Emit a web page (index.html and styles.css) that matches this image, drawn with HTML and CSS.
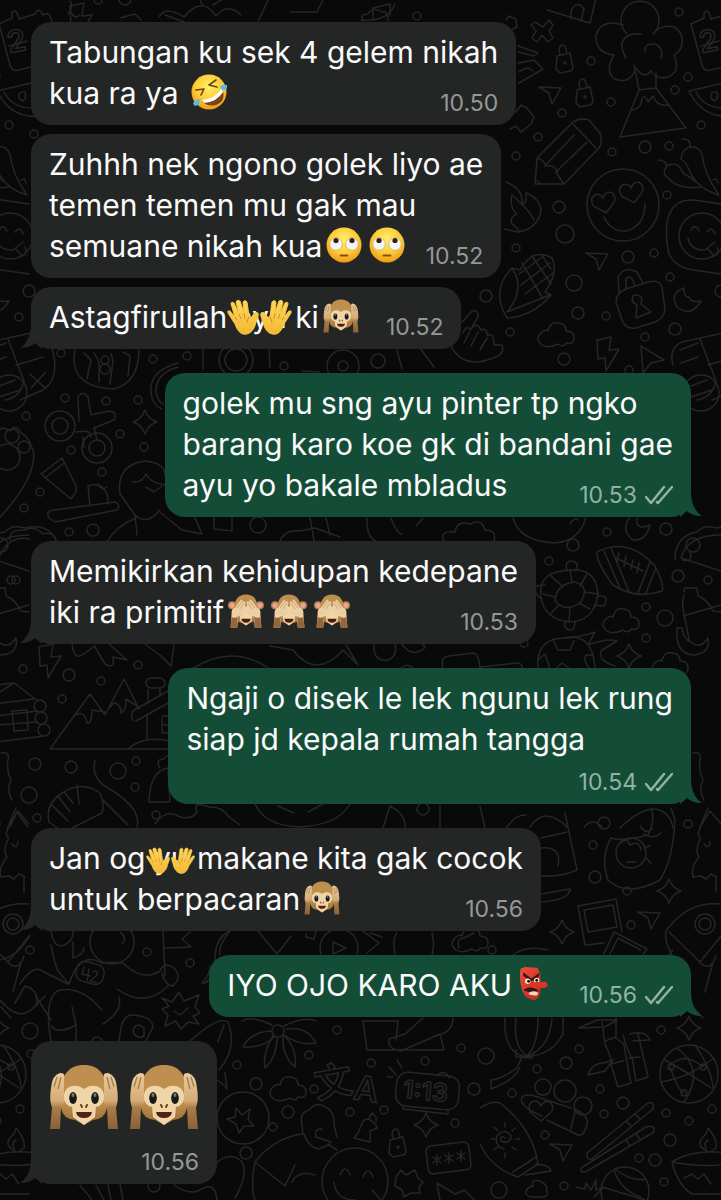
FILE: index.html
```html
<!DOCTYPE html>
<html lang="jv">
<head>
<meta charset="utf-8">
<meta name="viewport" content="width=device-width, initial-scale=1">
<title>Chat</title>
<link rel="stylesheet" href="styles.css">
</head>
<body>
<svg class="sprites" aria-hidden="true">
  <defs>
    <radialGradient id="face" cx=".5" cy=".35" r=".65"><stop offset="0" stop-color="#fff06a"/><stop offset=".6" stop-color="#fdcb35"/><stop offset="1" stop-color="#ee9a1b"/></radialGradient>
    <linearGradient id="fur" x1="0" y1="0" x2="0" y2="1"><stop offset="0" stop-color="#bd8e50"/><stop offset=".6" stop-color="#c1904f"/><stop offset="1" stop-color="#9a6b35"/></linearGradient>
    <linearGradient id="arm" x1="0" y1="0" x2="0" y2="1"><stop offset="0" stop-color="#e9cba0"/><stop offset=".5" stop-color="#d5ab76"/><stop offset=".62" stop-color="#a87c49"/><stop offset="1" stop-color="#8b6237"/></linearGradient>
    <linearGradient id="skin" x1="0" y1="0" x2="0" y2="1"><stop offset="0" stop-color="#ffd95e"/><stop offset="1" stop-color="#f3b732"/></linearGradient>
    <linearGradient id="red" x1="0" y1="0" x2="1" y2="1"><stop offset="0" stop-color="#f0513b"/><stop offset="1" stop-color="#b81f1c"/></linearGradient>
    <symbol id="rofl" viewBox="0 0 36 36">
      <circle cx="18" cy="18" r="17.5" fill="url(#face)"/>
      <path d="M11 27Q24 27 31 14Q36 27 25 31Q16 33 11 27Z" fill="#7c4313"/>
      <path d="M11 26Q24 25 31 14L32 18Q26 28 13 29Z" fill="#fff"/>
      <path d="M5 16L13 15L10 21M25 6L18 11L26 13" fill="none" stroke="#70400f" stroke-width="1.6" stroke-linecap="round" stroke-linejoin="round"/>
      <path d="M29 14Q30 10 36 11Q37 16 32 16ZM9 25Q9 31 4 32Q0 29 5 26Z" fill="#5bb9e9"/>
    </symbol>
    <symbol id="roll" viewBox="0 0 36 36">
      <circle cx="18" cy="18" r="17.5" fill="url(#face)"/>
      <circle cx="10" cy="17" r="6.3" fill="#f5f5f3" stroke="#c9ae77" stroke-width=".8"/><circle cx="26" cy="17" r="6.3" fill="#f5f5f3" stroke="#c9ae77" stroke-width=".8"/>
      <circle cx="10" cy="13.5" r="2.6" fill="#3a1d0c"/><circle cx="26" cy="13.5" r="2.6" fill="#3a1d0c"/>
      <path d="M14.500 28.500H21.500" stroke="#8a4b12" stroke-width="1.800" stroke-linecap="round"/>
    </symbol>
    <symbol id="monkey-head" viewBox="0 0 70 66">
      <path d="M35 1C20 1 13 11 13 24L12 44Q14 55 26 56L35 61L44 56Q56 55 58 44L57 24C57 11 50 1 35 1Z" fill="url(#fur)"/>
      <path d="M35 25C28 19 16 21 15 31Q14 41 23 43L24 53L35 61L46 53L47 43Q56 41 55 31C54 21 42 19 35 25Z" fill="#f0d6a7"/>
    </symbol>
    <symbol id="hear" viewBox="0 0 70 66">
      <use href="#monkey-head" width="70" height="66"/>
      <ellipse cx="24" cy="34" rx="3.800" ry="6" fill="#17191b"/><ellipse cx="46" cy="34" rx="3.800" ry="6" fill="#17191b"/>
      <ellipse cx="24" cy="31" rx="1.500" ry="2" fill="#777"/><ellipse cx="46" cy="31" rx="1.500" ry="2" fill="#777"/>
      <path d="M32 41L33 43M38 41L37 43" stroke="#6b4422" stroke-width="2" stroke-linecap="round"/>
      <path d="M27 48H43Q42 54 35 54Q28 54 27 48Z" fill="#55201a"/>
      <path d="M1 65L3 44Q0 35 2 24Q3 11 11 9Q17 8 15 16V38Q14 41 12 43L11 65Z" fill="url(#arm)"/>
      <path d="M69 65L67 44Q70 35 68 24Q67 11 59 9Q53 8 55 16V38Q56 41 58 43L59 65Z" fill="url(#arm)"/>
      <path d="M5 23L8 13M9 25L12 13M65 23L62 13M61 25L58 13" stroke="#a87b4a" stroke-width="1.300"/>
    </symbol>
    <symbol id="see" viewBox="0 0 70 66">
      <circle cx="8" cy="22" r="8" fill="#b98048"/><circle cx="62" cy="22" r="8" fill="#b98048"/><circle cx="8" cy="22" r="5" fill="#e9a590"/><circle cx="62" cy="22" r="5" fill="#e9a590"/>
      <use href="#monkey-head" width="70" height="66"/>
      <path d="M26 48H44Q43 56 35 56Q27 56 26 48Z" fill="#4a1d15"/>
      <path d="M5 65L7 39Q6 28 14 26L25 11Q29 10 28 16L32 14Q35 16 33 20V35Q33 43 20 43L18 65ZM65 65L63 39Q64 28 56 26L45 11Q41 10 42 16L38 14Q35 16 37 20V35Q37 43 50 43L52 65Z" fill="#ecd0a5"/>
      <path d="M5 65L7 44Q14 49 19 43L18 65ZM65 65L63 44Q56 49 51 43L52 65Z" fill="#946639"/>
      <path d="M18 27L27 15M23 29L31 18M52 27L43 15M47 29L39 18" stroke="#b78959" stroke-width="1.300"/>
    </symbol>
    <symbol id="hand" viewBox="0 0 32 36">
      <path d="M8 25L1 14Q0 11 3 12L8 18L4 5Q4 2 7 4L12 15L9 3Q10 0 13 2L17 14L16 3Q18 0 20 3L22 17Q24 20 26 16Q28 12 31 14Q32 16 29 23Q27 33 20 35Q12 37 8 25Z" fill="url(#skin)" stroke="#f8c744" stroke-width="1"/>
      <path d="M8 18L10 21M12 15L14 20M17 14L18 20M22 18Q20 21 20 24" fill="none" stroke="#cf8f20" stroke-width="1"/>
    </symbol>
    <symbol id="goblin" viewBox="0 0 34 40">
      <path d="M2 3L7 1L21 2L24 8V18Q32 15 32 22Q30 26 24 24Q25 35 18 38Q8 37 4 28Q0 14 2 3Z" fill="url(#red)"/>
      <path d="M5 7L14 14L24 7L21 14L14 17L5 11Z" fill="#351a14"/>
      <circle cx="10" cy="17" r="3" fill="#f5dfc6"/><circle cx="20" cy="16" r="3" fill="#f5dfc6"/><circle cx="11" cy="17" r="1.500"/><circle cx="20" cy="16" r="1.500"/>
      <path d="M5 27Q10 22 18 25L23 28Q15 28 11 29Z" fill="#2d1713"/><path d="M11 30Q17 26 22 30L20 33L12 32Z" fill="#ead9c3"/>
      <path d="M14 19Q18 17 25 18Q32 16 32 22Q28 26 15 24Z" fill="#d9352b"/>
    </symbol>
    <symbol id="ticks" viewBox="0 0 28 20"><path d="M1 12L6 18L19 2M12 17L13 18L27 2" fill="none" stroke="currentColor" stroke-width="2.500" stroke-linecap="round" stroke-linejoin="round"/></symbol>
    <symbol id="tail" viewBox="0 0 22 26"><path d="M11 0Q11 18 0 25Q10 25 15 20L22 26V0Z" fill="currentColor"/></symbol>
    <path id="star" d="M0-12Q3-3 12 0Q3 3 0 12Q-3 3-12 0Q-3-3 0-12Z"/>
    <path id="cloud" d="M-14 10Q-22 4-14-3Q-10-6-8-4Q-6-14 3-12Q10-11 10-4Q18-4 18 3Q18 10 10 8Q8 13 2 9Q-8 14-14 10Z"/>
    <path id="cursor" d="M-11-6L11-5L2 11L-1 0Z"/>
    <g id="lock"><path d="M-7-5L6-8L9 6Q9 9 6 10L-4 12L-8 8ZM-4-6L-5-12Q-3-18 1-15L3-8"/><circle cx="1" cy="2" r="1"/></g>
    <path id="heart" d="M0 11L-11 2Q-14-8-6-9Q-2-9 0-4Q3-10 9-8Q15-2 8 4Z"/>
    <path id="bolt" d="M-10-14L4-17L2-4L12-5L-1 17L-2 4L-9 5Z"/>
  </defs>
</svg>

<svg class="wallpaper" viewBox="0 0 721 1200" preserveAspectRatio="xMidYMin slice" aria-hidden="true">
  <g id="doodles">
    <!-- bubbles -->
    <circle cx="417" cy="16" r="4"/><circle cx="679" cy="12" r="4"/><circle cx="591" cy="61" r="4"/><circle cx="611" cy="102" r="4"/><circle cx="562" cy="113" r="4"/><circle cx="538" cy="137" r="4"/><circle cx="516" cy="156" r="4"/><circle cx="612" cy="152" r="4"/><circle cx="645" cy="147" r="6"/><circle cx="669" cy="146" r="4"/><circle cx="688" cy="77" r="4"/><circle cx="675" cy="90" r="4"/><circle cx="701" cy="125" r="4"/><circle cx="667" cy="195" r="4"/><circle cx="559" cy="207" r="6"/><circle cx="565" cy="234" r="9"/><circle cx="516" cy="248" r="4"/><circle cx="628" cy="257" r="6"/><circle cx="654" cy="253" r="4"/><circle cx="34" cy="134" r="4"/><circle cx="98" cy="0" r="4"/><circle cx="125" cy="-1" r="6"/>
    <circle cx="721" cy="291" r="6"/><circle cx="19" cy="317" r="4"/><circle cx="61" cy="353" r="4"/><circle cx="153" cy="359" r="4"/><circle cx="187" cy="356" r="4"/><circle cx="284" cy="366" r="4"/><circle cx="65" cy="398" r="4"/><circle cx="106" cy="401" r="4"/><circle cx="138" cy="400" r="4"/><circle cx="26" cy="416" r="4"/><circle cx="120" cy="434" r="4"/><circle cx="71" cy="450" r="4"/><circle cx="144" cy="447" r="4"/><circle cx="102" cy="472" r="4"/><circle cx="40" cy="492" r="4"/><circle cx="24" cy="508" r="4"/><circle cx="69" cy="532" r="4"/><circle cx="93" cy="530" r="6"/><circle cx="258" cy="525" r="8"/>
    <circle cx="486" cy="296" r="6"/><circle cx="574" cy="283" r="8"/><circle cx="670" cy="277" r="4"/><circle cx="578" cy="313" r="6"/><circle cx="606" cy="316" r="4"/><circle cx="510" cy="332" r="4"/><circle cx="645" cy="337" r="4"/><circle cx="675" cy="329" r="6"/><circle cx="564" cy="359" r="6"/><circle cx="378" cy="361" r="7"/><circle cx="629" cy="370" r="4"/><circle cx="607" cy="532" r="4"/><circle cx="666" cy="529" r="6"/>
    <circle cx="11" cy="580" r="4"/><circle cx="23" cy="669" r="4"/><circle cx="69" cy="675" r="6"/><circle cx="101" cy="681" r="4"/><circle cx="138" cy="665" r="4"/><circle cx="62" cy="699" r="4"/><circle cx="35" cy="764" r="6"/><circle cx="71" cy="767" r="6"/><circle cx="118" cy="771" r="8"/><circle cx="136" cy="761" r="4"/><circle cx="135" cy="787" r="4"/><circle cx="29" cy="795" r="8"/><circle cx="37" cy="818" r="4"/><circle cx="156" cy="815" r="4"/>
    <circle cx="573" cy="545" r="6"/><circle cx="549" cy="561" r="4"/><circle cx="678" cy="576" r="6"/><circle cx="646" cy="607" r="4"/><circle cx="665" cy="618" r="8"/><circle cx="646" cy="638" r="4"/><circle cx="524" cy="643" r="4"/><circle cx="423" cy="809" r="6"/><circle cx="604" cy="823" r="6"/><circle cx="688" cy="824" r="4"/><circle cx="593" cy="845" r="4"/><circle cx="595" cy="877" r="6"/><circle cx="627" cy="891" r="4"/><circle cx="631" cy="925" r="4"/><circle cx="492" cy="950" r="4"/><circle cx="661" cy="1030" r="4"/><circle cx="579" cy="1049" r="4"/><circle cx="566" cy="1063" r="6"/><circle cx="537" cy="1069" r="4"/><circle cx="512" cy="1093" r="4"/><circle cx="600" cy="1089" r="4"/><circle cx="623" cy="1103" r="6"/><circle cx="604" cy="1114" r="4"/><circle cx="666" cy="1113" r="4"/><circle cx="689" cy="1121" r="4"/><circle cx="712" cy="1109" r="4"/><circle cx="545" cy="1135" r="4"/><circle cx="670" cy="1140" r="6"/><circle cx="639" cy="1158" r="4"/><circle cx="655" cy="1160" r="6"/><circle cx="664" cy="1182" r="4"/><circle cx="564" cy="1186" r="4"/><circle cx="499" cy="1190" r="8"/><circle cx="486" cy="1056" r="8"/>
    <circle cx="337" cy="1030" r="4"/><circle cx="309" cy="1055" r="4"/><circle cx="371" cy="1063" r="4"/><circle cx="256" cy="1084" r="6"/><circle cx="314" cy="1089" r="4"/><circle cx="288" cy="1112" r="6"/><circle cx="350" cy="1112" r="4"/><circle cx="384" cy="1110" r="4"/><circle cx="273" cy="1127" r="4"/><circle cx="246" cy="1153" r="6"/><circle cx="425" cy="1061" r="4"/><circle cx="455" cy="1123" r="4"/><circle cx="461" cy="1048" r="4"/><circle cx="474" cy="1089" r="6"/><circle cx="30" cy="950" r="4"/><circle cx="147" cy="952" r="4"/><circle cx="190" cy="963" r="4"/><circle cx="30" cy="1031" r="8"/><circle cx="31" cy="1054" r="4"/><circle cx="237" cy="1065" r="4"/><circle cx="97" cy="1042" r="5"/><circle cx="154" cy="1186" r="6"/>
    <!-- stars, clouds, cursors, locks -->
    <use href="#star" x="145" y="422"/><use href="#star" x="629" y="656"/><use href="#star" x="669" y="891"/><use href="#star" x="562" y="932"/><use href="#star" x="426" y="1125"/><use href="#star" x="689" y="1028"/>
    <use href="#cloud" x="556" y="335"/><use href="#cloud" x="621" y="621"/><use href="#cloud" x="288" y="1089"/><use href="#cloud" x="670" y="665"/><use href="#cloud" x="470" y="940"/>
    <use href="#cursor" x="550" y="93"/><use href="#cursor" x="597" y="259"/><use href="#cursor" x="649" y="918"/><use href="#cursor" x="561" y="1150"/><path d="M641 346L664 360L651 363L643 373Z"/>
    <use href="#lock" x="564" y="61"/><use href="#lock" x="584" y="95"/><use href="#lock" x="397" y="1145"/>
    <use href="#bolt" x="607" y="354"/><use href="#bolt" x="49" y="661"/><use href="#bolt" x="80" y="20"/>
    <!-- top strip -->
    <path d="M159 17Q165 5 184 17Q202-5 216 16Q227 2 241 15M184 22L165 15M202 5L199-4M213 5L226-3M120 18L135 14L141 20M258 22L268 0M290 12L317 12L323 0M68 14Q74 6 70 1M71 12Q75 20 80 15M373 18V8L390 4V16M363 22Q359 14 368 14Q373 6 382 12Q388 10 388 21M506 20L509 16L516 19L517 27L511 30M361 20Q388 22 395 4M547 10L590 23L596-2M571 19V11Q577-1 584 9L581 20"/>
    <path d="M535 22L543 27L549 20L553 25L549 31L553 38L548 42L542 35L537 42L532 38L536 31L531 25Z"/>
    <path d="M627 34A19 19 0 1 1 653 34Q661 24 674 27A16 16 0 0 1 674 55Q681 72 668 77Q656 80 651 71Q644 80 636 68Q630 85 615 79Q604 72 614 55Q595 53 596 35Q602 18 623 25M626 58Q615 39 633 34H641M645 52Q644 43 655 44Q664 48 661 58M634 65L639 90L656 88V73M639 90L620 137L686 128L656 88M633 110Q642 108 642 98Q645 94 648 102L653 96Q657 107 669 105"/>
    <path d="M691 24L704 18V13Q708 7 711 19L727 14Q731 6 735 15Q742 10 744 23L743 37M691 24L702 65Q704 72 711 70L738 63M701 46L719 41"/>
    <text x="701" y="53" font-size="30" transform="rotate(-10 701 53)">2</text>
    <path d="M689 91L723 83L742 87M689 91Q703 120 735 116M696 92Q705 110 730 108M711 98Q710 91 717 92Q719 99 714 101Z"/>
    <path d="M518 46L538 53L534 56L518 52M518 63L534 60L543 69L519 83M519 72Q528 65 533 71M512 112L516 112L521 105L527 108L534 117L531 124L521 132L516 126L510 129"/>
    <path d="M535 184L537 158L573 122Q581 117 589 120L600 133Q603 142 599 148L564 184ZM573 124L596 148M537 158Q545 160 545 166Q557 164 557 174L564 184M545 166L574 135M556 172L587 142M535 179L541 184"/>
    <circle cx="623" cy="205" r="36"/><use href="#heart" x="604" y="202" transform="rotate(-12 604 202)"/><use href="#heart" x="632" y="192" transform="rotate(-12 632 192)"/><path d="M604 217Q611 232 626 231Q645 226 645 204"/>
    <path d="M506 182Q524 189 522 205Q527 203 526 193Q540 198 541 211Q537 230 517 232L505 229M512 195Q509 208 517 214Q509 217 512 224Q518 228 519 232M512 195Q531 212 534 220"/>
    <path d="M658 160Q665 160 667 166Q678 160 683 173Q695 180 701 186M667 166Q661 173 668 178Q678 190 701 187M682 139Q691 138 690 147Q698 145 702 154Q704 174 719 195Q700 190 691 174Q687 163 681 159Q682 149 690 147M713 180Q717 177 718 183"/>
    <circle cx="702" cy="236" r="23"/><path d="M668 250Q660 198 694 200L721 204M668 250Q672 267 694 270L721 274M691 230Q695 223 699 231M707 232Q712 225 715 234M688 238Q691 251 705 250L715 242M708 249L714 256Q720 254 717 247"/>
    <!-- corn, hand, padlock, moon, grid toy -->
    <path d="M507 318Q490 290 512 268L520 270Q533 247 552 258Q559 272 545 292L551 295Q532 317 507 318ZM512 268Q526 289 507 312L550 295M522 263L542 297M532 256L551 284M541 254L551 269M519 274L545 255M521 285L550 263M525 294L553 273"/>
    <path d="M452 348Q450 332 464 320L472 311Q479 310 478 317L471 329Q477 321 481 330Q487 327 487 335Q494 332 494 345L502 345Q505 352 498 356Q466 371 452 348ZM463 333Q466 325 471 329L464 343M478 332L471 346M487 338L480 350"/>
    <path d="M616 302Q616 293 626 289L648 282Q659 279 662 287L665 310Q664 318 655 322L636 328Q626 330 622 320ZM619 292L618 277Q625 265 637 272L643 283M626 288L626 279Q631 273 635 286M636 318L637 305Q629 301 634 295Q644 294 641 304L651 312Z"/>
    <path d="M684 288Q669 293 677 307Q691 318 701 301Q690 303 689 297Q684 298 684 288Z"/>
    <path d="M673 365Q667 343 691 340L723 333Q740 330 746 356Q750 380 735 390L712 400M700 339L716 381Q712 398 697 400M681 363L698 357M680 350L698 343M708 365L735 357M722 374L737 388M723 388L737 373"/><circle cx="701" cy="393" r="18"/><path d="M691 386L707 380M691 397L712 390"/>
    <!-- left doodles between the first bubbles -->
    <path d="M75 350Q68 387 114 389Q139 382 139 350M84 353L91 360L87 379M94 353L99 362L99 382M111 354L113 361L110 384M123 352L130 356L128 376"/><circle cx="105" cy="369" r="5"/><circle cx="105" cy="360" r="4"/>
    <path d="M178 363Q149 371 151 392Q152 405 162 409M178 367Q156 373 156 391Q157 401 163 404M203 348V369M269 348L270 367M302 371L319 372M397 350L402 369M420 348L434 367"/><circle cx="236" cy="360" r="11"/><circle cx="236" cy="360" r="17"/><circle cx="343" cy="366" r="16"/><circle cx="343" cy="366" r="5"/>
    <path d="M79 421L78 397Q83 390 88 397L91 415L109 411Q118 412 114 420L94 428L97 440M76 432Q92 429 91 437M83 437L84 447"/><circle cx="60" cy="426" r="15"/><circle cx="60" cy="426" r="8"/><circle cx="97" cy="448" r="15"/><circle cx="97" cy="448" r="8"/>
    <path d="M41 474L62 458L76 486V492L71 499L65 494ZM45 478L64 463M49 518Q45 511 54 510L115 502Q121 504 117 510L55 522ZM90 506L88 486Q93 484 99 485Q109 490 108 504M98 484Q101 491 107 487M120 494Q116 465 145 461Q165 463 165 475M120 494L135 515L137 535M132 482Q142 483 146 474Q150 483 165 485M146 487L154 492L162 486M135 515Q147 526 160 510M107 542Q116 526 136 518M161 513L182 530L202 534L193 513M214 517V529L232 531V517"/>
    <path d="M-2 432Q2 425 10 431Q15 423 21 433Q30 437 34 455Q33 482 0 517"/><circle cx="7" cy="457" r="13"/><circle cx="12" cy="436" r="7"/><circle cx="24" cy="447" r="6"/>
    <path d="M367 518Q366 537 376 541M391 518Q397 534 402 534M416 526L423 518M444 541Q439 530 455 532Q457 520 470 524Q482 518 485 530Q497 530 494 541M513 517Q518 541 555 543Q580 541 586 517M570 524Q574 517 578 520M630 517Q620 530 633 540Q646 541 650 525Q635 531 637 518"/>
    <path d="M0 555Q10 535 30 539M10 540Q8 530 24 530Q34 525 43 534Q53 531 56 540M280 542Q284 529 300 531L315 528L340 537M314 541L310 517M326 518L330 535"/>
    <!-- middle right -->
    <path d="M675 560Q675 536 697 532Q703 524 717 528Q740 523 748 540M681 558Q687 535 721 535M681 558L721 571M683 560Q693 563 690 551"/><circle cx="693" cy="545" r="7"/><circle cx="708" cy="580" r="4"/>
    <path d="M597 552Q628 536 655 566Q665 586 662 591Q636 600 613 585Q596 562 597 552ZM604 551L620 588M611 548L629 592M650 562L638 593M656 568L646 593M616 558L643 571M619 553L617 562M626 556L624 566M633 560L631 569M639 563L637 573"/>
    <path d="M541 597Q538 574 562 571Q596 564 598 594Q594 622 569 622Q544 619 541 597Z"/><path d="M555 601Q556 584 575 582Q591 587 580 603Q566 613 555 601ZM543 594L555 597M551 576L563 587M570 570L572 582M587 574L580 586M598 594L585 592M590 609L579 603M569 622L570 608M551 613L559 605M567 571Q564 560 573 561Q580 564 575 571M598 596Q610 594 604 606L594 605M575 621Q575 633 567 629Q563 626 566 621M542 599Q533 594 536 586L545 585"/>
    <path d="M538 669Q535 639 563 638Q593 631 595 669M553 639L558 650H570L574 641M562 638Q578 638 595 632L588 645Q608 638 617 641L602 650Q596 660 615 666M555 669L562 663L570 669M538 660L545 654L550 669M590 669Q582 660 586 655H593"/>
    <path d="M684 592L685 588L697 588L698 596Q708 600 713 611L721 612M684 595Q682 600 683 609L689 639M683 616L721 605M677 628Q675 654 694 655Q711 653 708 638Q700 650 691 642Q683 639 682 628Z"/>
    <path d="M374 644V651Q377 662 388 660Q398 656 395 644M402 644Q410 656 420 651Q427 649 423 644M443 668Q440 658 448 656L474 653Q479 655 480 668M480 667L518 663Q523 664 522 669M400 669Q406 662 413 668M72 644Q74 660 82 655L95 646M95 647L105 664Q115 670 113 657L127 660L109 644M145 644L161 656L171 666L174 644M192 669Q232 643 270 669M270 646L293 650Q316 680 343 650L358 665L346 645"/>
    <path d="M-5 685L14 683L38 701M14 683L-5 695M-5 704L34 699M-5 716L38 711M12 711L27 710L28 730L14 731ZM-5 725L37 722M-5 742L44 736"/><circle cx="40" cy="706" r="6"/><circle cx="41" cy="718" r="6"/><circle cx="44" cy="730" r="6"/>
    <path d="M50 749L90 694L105 715L124 679L139 709M50 749H170M73 717Q84 708 87 723Q92 724 92 710L105 712M109 708L114 703Q121 704 121 713Q126 712 126 699L137 706M133 721Q129 712 136 709L170 690M136 721L170 702M148 689V703M160 688V694M147 716V740M128 749Q143 735 170 741M162 716H170M162 718V733H170M162 725H170"/><rect x="146" y="678" width="19" height="10" rx="5"/>
    <path d="M95 760Q90 780 113 791Q142 810 137 827M60 830L49 822Q45 804 62 793Q82 780 100 793Q105 804 102 813L70 829M102 799L128 825M65 793L73 803M58 796L70 812M51 804L68 821M77 785L79 804M149 801Q150 771 168 768L170 802H149ZM160 768Q155 759 164 759Q168 752 171 760M155 824Q166 808 180 817Q192 820 197 812Q192 800 209 807Q222 806 229 817L240 825M10 827L17 812L28 827"/>
    <path d="M255 804Q265 826 300 827Q338 825 350 804M278 806L294 813M308 812L323 804M383 828L390 806Q406 814 405 828M440 828V806M480 806L485 828M507 827Q516 814 526 815M530 827Q545 805 567 827M584 827Q593 817 602 827M620 828Q646 803 662 811Q672 817 673 828M700 827L710 811L721 824M693 753Q702 751 700 760Q698 770 703 780Q698 790 704 800"/>
    <!-- lower right -->
    <path d="M651 808Q656 820 648 835Q621 842 611 838Q600 858 608 880Q627 898 660 880Q673 860 675 820L671 808M640 826Q646 835 652 829M644 834Q653 840 661 833"/><circle cx="631" cy="853" r="15"/><path d="M622 842Q628 837 629 844M630 845Q639 840 641 850M627 862H636M644 848L650 846M646 858L651 863"/>
    <path d="M708 808Q702 820 698 834Q702 839 699 841Q695 852 699 857Q690 868 693 877L701 876L706 879L711 874L717 877M704 844Q709 850 710 842M716 877V892"/>
    <path d="M565 813L577 870Q561 877 541 876M541 838L567 832M541 848Q562 846 558 866M541 894L570 889Q570 900 541 902M578 906L616 899L622 932M578 906L585 945L604 943M584 910L613 905L617 927L588 932ZM603 956L614 932L647 949L642 956M609 956L618 938L641 950"/>
    <path d="M672 955Q660 933 670 926Q690 901 721 904M669 932L700 962L721 936M669 955L673 950M713 962L705 992M700 963Q711 972 716 956"/><circle cx="705" cy="924" r="10"/><circle cx="705" cy="924" r="6"/>
    <path d="M693 1007L703 1018M513 955Q526 945 548 950"/>
    <path d="M505 1018Q503 1053 526 1057Q552 1055 563 1034L563 1018M516 1018Q513 1047 527 1056M538 1018Q538 1045 527 1056M552 1018Q550 1047 528 1056M516 1050V1057L532 1058L534 1052M522 1057L517 1068Q500 1080 491 1080V1089Q514 1081 520 1067M579 1028L597 1020H617L605 1027ZM602 1022L605 1044M616 1018V1037L605 1041M605 1044Q613 1061 611 1064L618 1087M616 1038L624 1044Q625 1054 631 1083L618 1087M611 1064L623 1061M623 1035Q630 1058 632 1057L636 1081L648 1077L638 1034M629 1058L640 1057M630 1034Q646 1030 650 1040L632 1041M588 1075Q592 1063 604 1063L613 1060L605 1071Z"/>
    <circle cx="689" cy="1074" r="29"/><path d="M665 1060Q692 1075 711 1088M661 1082Q688 1078 714 1058M677 1048Q706 1070 684 1102M670 1067Q678 1090 684 1093M695 1045Q712 1070 713 1088M671 1065Q684 1051 703 1067"/><circle cx="671" cy="1067" r="3"/><circle cx="703" cy="1067" r="3"/><circle cx="684" cy="1093" r="3"/>
    <circle cx="543" cy="1087" r="8"/><circle cx="565" cy="1091" r="11"/><circle cx="583" cy="1106" r="9"/><path d="M542 1116Q518 1106 522 1097Q527 1092 546 1100L571 1108M547 1120L578 1135Q584 1137 587 1124Q589 1115 574 1109M571 1129L575 1111"/><use href="#heart" x="541" y="1110"/>
    <path d="M480 1108Q492 1100 500 1103Q533 1129 538 1164L518 1177Q491 1168 480 1144M513 1172L536 1157M525 1175L551 1171Q550 1165 536 1164M505 1138Q500 1134 501 1141Q510 1145 511 1136Q505 1127 497 1136Q494 1146 504 1149M505 1123V1127M505 1153V1158M491 1139H495M516 1139H520M494 1127L498 1131M515 1128L512 1131M494 1150L498 1147M516 1150L512 1147"/>
    <path d="M587 1153L648 1103Q655 1101 653 1109L592 1159Q586 1160 587 1153ZM581 1168L646 1127Q655 1124 654 1132L587 1171Q580 1174 581 1168ZM626 1121L631 1126M635 1114L640 1119M626 1140L630 1146M636 1134L640 1139"/><circle cx="625" cy="1191" r="24"/><path d="M602 1187L645 1200M615 1169Q631 1182 646 1179M614 1170Q621 1191 641 1197"/>
    <path d="M672 1162Q695 1147 735 1154V1162Q709 1169 672 1162ZM672 1162Q678 1186 692 1194H721M684 1178L692 1174L698 1179L704 1174L711 1184M707 1151Q695 1145 703 1137Q708 1132 708 1128Q718 1140 716 1148L710 1152M706 1148Q703 1143 708 1140"/><path d="M526 1194Q525 1188 533 1186Q530 1179 540 1181Q549 1186 546 1190Q550 1195 544 1197H530ZM576 1187L585 1189L586 1183L591 1190L596 1180L596 1190L603 1188L594 1197"/>
    <!-- lower middle -->
    <path d="M230 931Q218 945 220 955M258 931L277 954L291 936M306 934V937L314 939L316 931M363 931L379 943L367 953M370 933L382 937M395 955Q392 938 397 933M432 955Q435 944 432 933M459 948Q456 938 464 938L474 933"/><circle cx="339" cy="948" r="19"/><path d="M333 942V954L346 948Z"/>
    <circle cx="278" cy="1031" r="6"/><path d="M272 1025Q252 1015 242 1021M284 1026Q304 1016 316 1021M272 1031Q250 1032 243 1047Q263 1048 274 1037M273 1036Q262 1054 265 1068Q277 1057 277 1038M283 1037Q282 1056 295 1067Q298 1049 283 1034M286 1029Q307 1026 316 1043Q299 1046 284 1035M363 1021H398L396 1040M363 1021L367 1050H444L440 1034L401 1051Q387 1049 389 1039L405 1034L423 1018M442 1034Q453 1030 453 1018"/>
    <text x="314" y="1096" font-size="38" transform="rotate(-10 330 1080)">文</text><text x="354" y="1101" font-size="34" transform="rotate(8 366 1090)">A</text>
    <rect x="396" y="1074" width="63" height="34" rx="11" transform="rotate(5 427 1091)"/><text x="403" y="1100" font-size="25" transform="rotate(5 427 1091)">1:13</text><path d="M403 1106V1109L448 1114V1110M437 1076Q443 1068 450 1078M389 1067L396 1075M397 1060L402 1068M387 1077H393"/>
    <path d="M303 1134L302 1124Q299 1113 309 1110Q316 1101 326 1107Q335 1112 334 1125L337 1137M322 1129Q314 1128 316 1137Q326 1140 331 1142M304 1134Q309 1148 319 1149L330 1144M302 1134Q274 1138 255 1162L285 1186L295 1165M255 1162Q250 1187 255 1200M292 1182Q298 1170 315 1175M329 1145L337 1150"/><circle cx="355" cy="1181" r="33"/><path d="M340 1175Q345 1163 350 1175M363 1177Q368 1165 373 1177M334 1182Q336 1200 355 1200M372 1190L380 1199"/>
    <path d="M354 1138L358 1133L363 1121Q369 1116 376 1125L377 1128L370 1131L370 1142ZM369 1118L372 1113L376 1117V1121M396 1177L401 1170L406 1175L415 1170L418 1178L423 1182L419 1187L420 1193L411 1193L404 1197L402 1190L395 1186ZM437 1183L455 1194L465 1190L474 1200M437 1183L440 1200"/><rect x="427" y="1144" width="43" height="28" rx="5" transform="rotate(-7 448 1158)"/><path d="M437 1155V1165M433 1157L441 1163M441 1157L433 1163M449 1153V1163M445 1155L453 1161M453 1155L445 1161M461 1151V1161M457 1153L465 1159M465 1153L457 1159"/>
    <!-- lower left -->
    <circle cx="112" cy="942" r="22"/><path d="M120 932Q128 938 122 944M51 931Q53 946 62 946Q74 942 73 931M51 945Q55 965 58 971L69 984M73 942L73 958Q84 954 84 948M69 984Q80 950 102 963Q118 961 124 964Q143 982 160 971M0 1000Q20 1024 35 1006L45 996M20 984Q34 963 44 972L68 984M0 960Q20 955 30 935M37 998L51 1020M15 1003L25 986Q40 990 36 1006M51 1041Q43 996 60 990Q82 986 102 1010M72 1007L76 1025Q59 1035 51 1026M76 1025V1041M103 1024Q123 1011 119 997M117 989Q145 1009 168 986M160 971Q164 961 174 968Q183 979 172 986Q164 984 162 973M163 931L165 976M165 948L191 947L182 939L190 932M215 963Q214 939 229 931M213 975Q207 984 202 983Q210 975 210 966"/>
    <rect x="76" y="963" width="28" height="20" rx="8" transform="rotate(15 90 973)"/><path d="M84 967L82 974L90 976M89 969L87 981M93 972Q98 969 97 975L90 981L97 983"/>
    <path d="M162 998L172 1002L179 992L184 1001L199 995L195 1007L200 1013L193 1016L199 1024L188 1022L181 1029L176 1021L165 1026L168 1015L162 1009L169 1006ZM174 1011L180 1015L188 1008M119 1041L121 1028Q124 1014 134 1015Q153 1017 153 1027L146 1041M133 1031Q136 1021 144 1028V1036Q136 1040 133 1031ZM190 1041Q219 1015 228 1022Q238 1048 219 1070M218 1042L224 1025M217 1080Q226 1086 227 1089L225 1073"/>
    <circle cx="243" cy="1118" r="26"/><path d="M236 1108L242 1115L250 1109L248 1119L254 1126L244 1126L239 1133L236 1124L227 1119L235 1117Z"/>
    <path d="M217 1162Q232 1151 242 1162Q249 1174 235 1198M80 1185L92 1200M96 1185L104 1200M108 1185L111 1200M120 1184L123 1200M174 1185Q190 1196 200 1190Q215 1180 217 1200"/>
  </g>
  <use href="#doodles" x="-692"/>
</svg>

<main class="chat">
  <article class="bubble in">
    <p>Tabungan ku sek 4 gelem nikah</p>
    <div class="last"><p>kua ra ya <svg class="emoji" role="img" aria-label="🤣"><use href="#rofl"/></svg></p><time>10.50</time></div>
  </article>
  <article class="bubble in">
    <p>Zuhhh nek ngono golek liyo ae<br>temen temen mu gak mau</p>
    <div class="last"><p>semuane nikah kua<svg class="emoji" role="img" aria-label="🙄"><use href="#roll"/></svg><svg class="emoji" role="img" aria-label="🙄"><use href="#roll"/></svg></p><time>10.52</time></div>
  </article>
  <article class="bubble in">
    <svg class="tail"><use href="#tail"/></svg>
    <div class="last"><p>Astagfirullah<span class="covered"> ayu <span class="hands"><svg role="img" aria-label="hand"><use href="#hand"/></svg><svg class="flip" role="img" aria-label="hand"><use href="#hand"/></svg></span></span>ki<svg class="emoji" role="img" aria-label="🙉"><use href="#hear"/></svg></p><time>10.52</time></div>
  </article>
  <article class="bubble out">
    <svg class="tail"><use href="#tail"/></svg>
    <p>golek mu sng ayu pinter tp ngko<br>barang karo koe gk di bandani gae</p>
    <div class="last"><p>ayu yo bakale mbladus</p><time>10.53<svg class="ticks" role="img" aria-label="Delivered"><use href="#ticks"/></svg></time></div>
  </article>
  <article class="bubble in">
    <svg class="tail"><use href="#tail"/></svg>
    <p>Memikirkan kehidupan kedepane</p>
    <div class="last"><p>iki ra primitif<svg class="emoji" role="img" aria-label="🙈"><use href="#see"/></svg><svg class="emoji" role="img" aria-label="🙈"><use href="#see"/></svg><svg class="emoji" role="img" aria-label="🙈"><use href="#see"/></svg></p><time>10.53</time></div>
  </article>
  <article class="bubble out">
    <svg class="tail"><use href="#tail"/></svg>
    <p>Ngaji o disek le lek ngunu lek rung<br>siap jd kepala rumah tangga</p>
    <div class="last own"><time>10.54<svg class="ticks" role="img" aria-label="Delivered"><use href="#ticks"/></svg></time></div>
  </article>
  <article class="bubble in">
    <svg class="tail"><use href="#tail"/></svg>
    <p>Jan og<span class="covered small"> yu <span class="hands"><svg role="img" aria-label="hand"><use href="#hand"/></svg><svg class="flip" role="img" aria-label="hand"><use href="#hand"/></svg></span></span>makane kita gak cocok</p>
    <div class="last"><p>untuk berpacaran<svg class="emoji" role="img" aria-label="🙉"><use href="#hear"/></svg></p><time>10.56</time></div>
  </article>
  <article class="bubble out">
    <svg class="tail"><use href="#tail"/></svg>
    <div class="last"><p>IYO OJO KARO AKU<svg class="emoji" role="img" aria-label="👺"><use href="#goblin"/></svg></p><time>10.56<svg class="ticks" role="img" aria-label="Delivered"><use href="#ticks"/></svg></time></div>
  </article>
  <article class="bubble in">
    <svg class="tail"><use href="#tail"/></svg>
    <div class="big"><svg role="img" aria-label="🙉"><use href="#hear"/></svg><svg role="img" aria-label="🙉"><use href="#hear"/></svg></div>
    <div class="last own"><time>10.56</time></div>
  </article>
</main>
</body>
</html>
```

FILE: styles.css
```css
* { box-sizing: border-box; }

body {
  position: relative;
  margin: 0;
  min-height: 100vh;
  overflow-x: hidden;
  background: #090909;
  color: #fafafa;
  font-family: Inter, "Liberation Sans", "Noto Sans CJK SC", sans-serif;
  font-size: 30px;
  line-height: 41px;
}

p { margin: 0; }

.sprites { position: absolute; width: 0; height: 0; }

.wallpaper {
  position: absolute;
  inset: 0;
  width: 100%;
  height: 100%;
  fill: none;
  stroke: #262626;
  stroke-width: 1.5;
  stroke-linecap: round;
  stroke-linejoin: round;
}

.wallpaper text { font-weight: 600; }

.chat {
  position: relative;
  display: flex;
  flex-direction: column;
  align-items: flex-start;
  gap: 24px;
  padding: 22px 30px 15px 31px;
}

.bubble {
  position: relative;
  padding: 10px 18px 11px;
  border-radius: 20px;
  white-space: nowrap;
}

.in { background: #242626; color: #fafafa; }
.in + .in { margin-top: -15px; }
.out { align-self: flex-end; background: #144d37; }

.tail {
  position: absolute;
  bottom: 0;
  left: -11px;
  width: 22px;
  height: 26px;
  color: #242626;
}

.out .tail {
  left: auto;
  right: -11px;
  color: #144d37;
  transform: scaleX(-1);
}

.last {
  display: flex;
  justify-content: space-between;
  align-items: flex-end;
  gap: 16px;
}

.tail + .last { gap: 24px; }

.own { justify-content: flex-end; height: 33px; }

time {
  display: flex;
  align-items: center;
  gap: 8px;
  color: #969898;
  font-size: 23px;
  line-height: 22px;
}

.out time { color: #91b3a4; }
.ticks { width: 28px; height: 20px; }

.emoji {
  width: 36px;
  height: 36px;
  margin: 0 3px 0 4px;
  vertical-align: -6px;
}

.covered { position: relative; white-space: pre; }

.hands {
  position: absolute;
  left: 0;
  bottom: 0;
  display: flex;
  gap: 1px;
}

.hands svg { width: 32px; height: 36px; }
.small .hands { left: 0; bottom: 2px; }
.small .hands svg { width: 24px; height: 27px; }
.flip { transform: scaleX(-1); }

.big {
  display: flex;
  gap: 10px;
  padding-top: 13px;
}

.big svg { width: 70px; height: 66px; }
.big + .own { height: 43px; }
```
